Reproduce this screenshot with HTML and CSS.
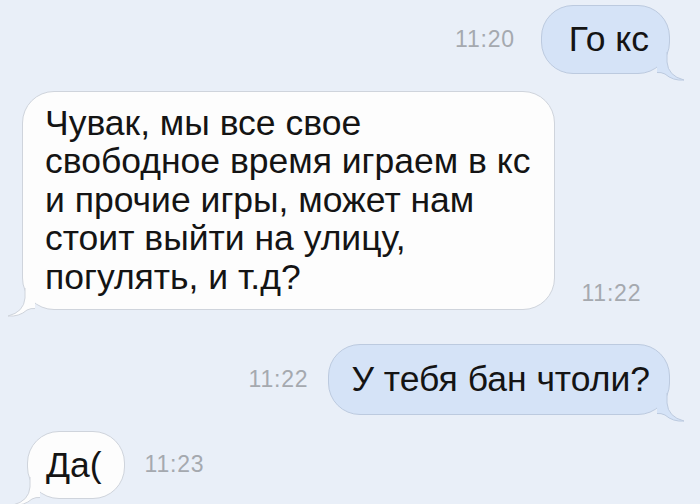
FILE: index.html
```html
<!DOCTYPE html>
<html lang="ru">
<head>
<meta charset="utf-8">
<title>Сообщения</title>
<link rel="stylesheet" href="styles.css">
</head>
<body>
<main class="chat">
  <div class="row row-out r1">
    <span class="time">11:20</span>
    <div class="bubble out">Го кс
      <svg class="tail" viewBox="0 0 30 30" width="30" height="30"><path class="tail-fill" d="M0 0 L10 0 L10 10 Q11 24 27 28 Q16 29 8 22 Q4 20 0 20.5 Z"/><path class="tail-line" d="M10 0 L10 10 Q11 24 27 28 Q16 29 8 22 Q4 20 0 20.5"/></svg>
    </div>
  </div>

  <div class="row row-in r2">
    <div class="bubble in">Чувак, мы все свое<br>свободное время играем в кс<br>и прочие игры, может нам<br>стоит выйти на улицу,<br>погулять, и т.д?
      <svg class="tail" viewBox="0 0 30 30" width="30" height="30"><path class="tail-fill" d="M0 0 L10 0 L10 10 Q11 24 27 28 Q16 29 8 22 Q4 20 0 20.5 Z"/><path class="tail-line" d="M10 0 L10 10 Q11 24 27 28 Q16 29 8 22 Q4 20 0 20.5"/></svg>
    </div>
    <span class="time">11:22</span>
  </div>

  <div class="row row-out r3">
    <span class="time">11:22</span>
    <div class="bubble out">У тебя бан чтоли?
      <svg class="tail" viewBox="0 0 30 30" width="30" height="30"><path class="tail-fill" d="M0 0 L10 0 L10 10 Q11 24 27 28 Q16 29 8 22 Q4 20 0 20.5 Z"/><path class="tail-line" d="M10 0 L10 10 Q11 24 27 28 Q16 29 8 22 Q4 20 0 20.5"/></svg>
    </div>
  </div>

  <div class="row row-in r4">
    <div class="bubble in short">Да(
      <svg class="tail" viewBox="0 0 30 30" width="30" height="30"><path class="tail-fill" d="M0 0 L10 0 L10 10 Q11 24 27 28 Q16 29 8 22 Q4 20 0 20.5 Z"/><path class="tail-line" d="M10 0 L10 10 Q11 24 27 28 Q16 29 8 22 Q4 20 0 20.5"/></svg>
    </div>
    <span class="time">11:23</span>
  </div>
</main>
</body>
</html>
```
FILE: styles.css
```css
html, body {
  margin: 0;
  padding: 0;
  background: #e9eff8;
}

body {
  width: 700px;
  height: 504px;
  overflow: hidden;
  font-family: "Liberation Sans", Arial, sans-serif;
  color: #141414;
}

.chat {
  display: flex;
  flex-direction: column;
  padding-top: 5px;
}

.row {
  display: flex;
  align-items: center;
}

.row-out {
  justify-content: flex-end;
  padding-right: 30px;
}

.row-in {
  justify-content: flex-start;
  padding-left: 22px;
}

.r2 { margin-top: 17px; align-items: flex-end; }
.r3 { margin-top: 34px; }
.r4 { margin-top: 16px; }

.time {
  font-size: 23px;
  color: #a5a9af;
  letter-spacing: 0.8px;
}

.r1 .time { margin-right: 26px; }
.r3 .time { margin-right: 20px; }
.r2 .time { margin-left: 26px; margin-bottom: 3px; }
.r4 .time { margin-left: 20px; }

.bubble {
  position: relative;
  font-size: 35.5px;
  line-height: 38.5px;
  padding: 13px 22px 14px;
  border-radius: 32px;
  border: 1px solid;
}

.r1 .bubble { padding: 14px 20px 14px 27px; }
.r2 .bubble { padding: 12px 24px 13px 22px; }
.r3 .bubble { padding: 15px 19px 15px 22px; }

.bubble.out {
  background: #d5e3f7;
  border-color: #bccadf;
}

.bubble.in {
  background: #fdfdfd;
  border-color: #cfd4dc;
}

.bubble.in.short {
  margin-left: 5px;
  padding: 14px 22px 14px 18px;
}

.tail {
  position: absolute;
  bottom: -9px;
  right: -18px;
  overflow: visible;
}

.bubble.in .tail {
  right: auto;
  left: -18px;
  transform: scaleX(-1);
}

.bubble.out .tail-fill { fill: #d5e3f7; }
.bubble.in .tail-fill { fill: #fdfdfd; }

.tail-line {
  fill: none;
  stroke-width: 1;
}

.bubble.out .tail-line { stroke: #bccadf; }
.bubble.in .tail-line { stroke: #cfd4dc; }
```
